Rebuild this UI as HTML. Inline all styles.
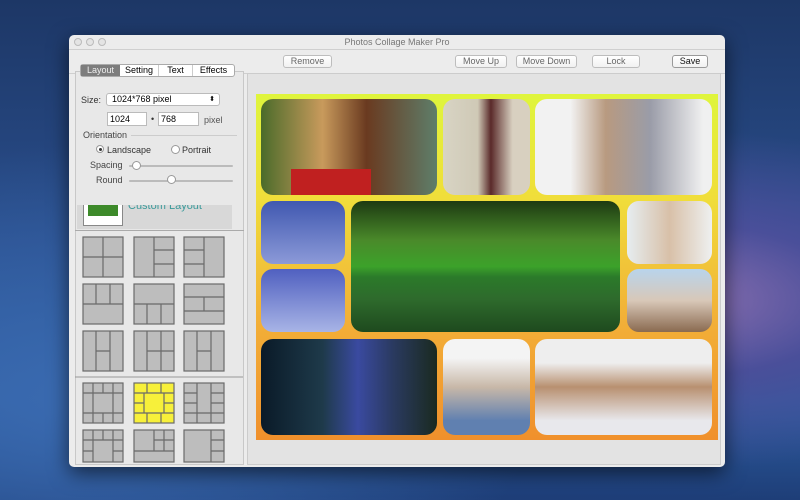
<!DOCTYPE html>
<html><head><style>
*{margin:0;padding:0;box-sizing:border-box}
body{width:800px;height:500px;overflow:hidden;position:relative;font-family:"Liberation Sans",sans-serif;
background:radial-gradient(ellipse at 85% 60%,#8a6fb0 0%,#4a4f9a 18%,transparent 40%),radial-gradient(ellipse at 10% 80%,#3a6ab0 0%,transparent 45%),linear-gradient(180deg,#1d3766 0%,#2a4f8e 50%,#2d5da0 80%,#1e3e78 100%)}
.a{position:absolute}
.win{left:69px;top:35px;width:656px;height:432px;background:#ececec;border-radius:5px;box-shadow:0 6px 20px rgba(0,0,0,.6)}
.title{left:0;top:0;width:656px;height:14px;text-align:center;font-size:9px;color:#777;line-height:14px}
.dot{width:8px;height:8px;border-radius:50%;border:1px solid #bbb;background:#e4e4e4;top:3px}
.btn{height:13px;border:1px solid #bdbdbd;border-radius:3px;background:linear-gradient(#fff,#f1f1f1);font-size:9px;color:#666;text-align:center;line-height:11px}
.lp{left:6px;top:36px;width:169px;height:394px;border:1px solid #c8c8c8;background:#e8e8e8}
.rp{left:178px;top:38px;width:474px;height:392px;border:1px solid #ccc;background:#e3e3e3}
.t{font-size:9px;color:#333}
.ph{position:absolute;border-radius:12px;overflow:hidden}
</style></head><body>
<div class="a win">
 <div class="a title">Photos Collage Maker Pro</div>
 <div class="a dot" style="left:5px"></div><div class="a dot" style="left:17px"></div><div class="a dot" style="left:29px"></div>
 <div class="a" style="left:0;top:14px;width:656px;height:1px;background:#cfcfcf"></div>
 <div class="a btn" style="left:214px;top:20px;width:49px">Remove</div>
 <div class="a btn" style="left:386px;top:20px;width:52px">Move Up</div>
 <div class="a btn" style="left:447px;top:20px;width:61px">Move Down</div>
 <div class="a btn" style="left:523px;top:20px;width:48px">Lock</div>
 <div class="a btn" style="left:603px;top:20px;width:36px;color:#111;border-color:#999">Save</div>
 <div class="a" style="left:0;top:38px;width:656px;height:1px;background:#cfcfcf"></div>
 <div class="a lp"></div>
 <div class="a" style="left:11px;top:29px;width:155px;height:13px;border:1px solid #aaa;border-radius:3px;background:#fff;font-size:9px;display:flex;line-height:11px">
  <div style="width:39px;background:#7d7d7d;color:#eee;text-align:center">Layout</div>
  <div style="width:39px;text-align:center;border-right:1px solid #ccc">Setting</div>
  <div style="width:34px;text-align:center;border-right:1px solid #ccc">Text</div>
  <div style="flex:1;text-align:center">Effects</div>
 </div>
 <div class="a t" style="left:12px;top:60px">Size:</div>
 <div class="a" style="left:37px;top:58px;width:114px;height:13px;border:1px solid #bbb;border-radius:3px;background:#fff;font-size:9px;line-height:11px;padding-left:5px">1024*768 pixel<span style="float:right;margin-right:4px;font-size:7px">⬍</span></div>
 <div class="a" style="left:38px;top:77px;width:40px;height:14px;border:1px solid #bbb;background:#fff;font-size:9px;line-height:12px;padding-left:2px">1024</div>
 <div class="a t" style="left:82px;top:79px">•</div>
 <div class="a" style="left:89px;top:77px;width:41px;height:14px;border:1px solid #bbb;background:#fff;font-size:9px;line-height:12px;padding-left:2px">768</div>
 <div class="a t" style="left:135px;top:80px;color:#555">pixel</div>
 <div class="a t" style="left:14px;top:95px;color:#444">Orientation</div>
 <div class="a" style="left:62px;top:100px;width:106px;height:1px;background:#ccc"></div>
 <div class="a" style="left:27px;top:110px;width:8px;height:8px;border:1px solid #999;border-radius:50%;background:#fff"><div style="width:3px;height:3px;background:#333;border-radius:50%;margin:1.5px"></div></div>
 <div class="a t" style="left:38px;top:110px">Landscape</div>
 <div class="a" style="left:102px;top:110px;width:9px;height:9px;border:1px solid #999;border-radius:50%;background:#fff"></div>
 <div class="a t" style="left:113px;top:110px">Portrait</div>
 <div class="a t" style="left:21px;top:125px;color:#444">Spacing</div>
 <div class="a" style="left:60px;top:130px;width:104px;height:2px;background:#bbb;border-radius:1px"></div>
 <div class="a" style="left:63px;top:126px;width:9px;height:9px;border:1px solid #999;border-radius:50%;background:#fff"></div>
 <div class="a t" style="left:27px;top:140px;color:#444">Round</div>
 <div class="a" style="left:60px;top:145px;width:104px;height:2px;background:#bbb;border-radius:1px"></div>
 <div class="a" style="left:98px;top:140px;width:9px;height:9px;border:1px solid #999;border-radius:50%;background:#fff"></div>
 <div class="a" style="left:8px;top:170px;width:155px;height:24px;background:#d8d8d8;overflow:hidden">
  <div class="a" style="left:6px;top:-6px;width:40px;height:27px;border:1px solid #888;background:#fff"><div style="margin:2px 4px;height:14px;background:#3d8a2a"></div></div>
  <div class="a" style="left:51px;top:-5px;font-size:11px;color:#3a9a9a">Custom Layout</div>
 </div>
 <div class="a" style="left:6px;top:195px;width:169px;height:1px;background:#aaa"></div>
 <svg class="a" style="left:6px;top:196px" width="168" height="234">
  <g fill="#bdbdbd" stroke="#6a6a6a" stroke-width="1.2">
   <rect x="8" y="6" width="40" height="40"/><rect x="59" y="6" width="40" height="40"/><rect x="109" y="6" width="40" height="40"/>
   <rect x="8" y="53" width="40" height="40"/><rect x="59" y="53" width="40" height="40"/><rect x="109" y="53" width="40" height="40"/>
   <rect x="8" y="100" width="40" height="40"/><rect x="59" y="100" width="40" height="40"/><rect x="109" y="100" width="40" height="40"/>
   <rect x="8" y="152" width="40" height="40"/><rect x="59" y="152" width="40" height="40" fill="#f7f03a"/><rect x="109" y="152" width="40" height="40"/>
   <rect x="8" y="199" width="40" height="32"/><rect x="59" y="199" width="40" height="32"/><rect x="109" y="199" width="40" height="32"/>
  </g>
  <g stroke="#6a6a6a" stroke-width="1.2" fill="none">
   <path d="M28 6V46M8 26H48M79 6V46M79 19H99M79 33H99M129 6V46M109 19H129M109 33H129"/>
   <path d="M8 73H48M21 53V73M35 53V73M59 73H99M72 73V93M86 73V93M109 66H149M109 80H149M129 66V80"/>
   <path d="M21 100V140M35 100V140M21 120H35M72 100V140M86 100V140M72 120H99M122 100V140M136 100V140M122 120H136"/>
   <path d="M8 162H48M8 182H48M18 152V162M28 152V162M38 152V162M18 182V192M28 182V192M38 182V192M18 162V182M38 162V182"/>
   <path d="M59 162H99M59 182H99M69 162V182M89 162V182M72 152V162M86 152V162M72 182V192M86 182V192M59 172H69M89 172H99"/>
   <path d="M109 182H149M122 152V192M136 152V192M109 162H122M109 172H122M136 162H149M136 172H149"/>
   <path d="M8 209H48M18 199V231M38 199V231M28 199V209M8 220H18M38 220H48"/>
   <path d="M59 220H99M79 199V220M79 209H99M89 199V220"/>
   <path d="M136 199V231M136 209H149M136 220H149"/>
  </g>
  <path d="M0 146H168" stroke="#999"/>
 </svg>
 <div class="a rp"></div>
</div>
<div class="a" style="left:256px;top:94px;width:462px;height:346px;background:linear-gradient(180deg,#dff53c 0%,#f0de3a 30%,#f2b038 65%,#f0902c 100%)">
 <div class="ph" style="left:5px;top:5px;width:176px;height:96px;background:linear-gradient(90deg,#4a6b2a,#c89a5c 35%,#6a3a20 60%,#5e7e6a);"><div class="a" style="left:30px;top:70px;width:80px;height:30px;background:#c02020"></div></div>
 <div class="ph" style="left:187px;top:5px;width:87px;height:96px;background:linear-gradient(90deg,#d8d4c4,#cfc9b6 40%,#5a2a2a 55%,#d8d0c0 80%)"></div>
 <div class="ph" style="left:279px;top:5px;width:177px;height:96px;background:linear-gradient(90deg,#f2f2f2 20%,#b89a80 40%,#9a9ca8 65%,#f0f0f0 95%)"></div>
 <div class="ph" style="left:5px;top:107px;width:84px;height:63px;background:linear-gradient(#4058b0,#8c9ad8)"></div>
 <div class="ph" style="left:5px;top:175px;width:84px;height:63px;background:linear-gradient(#5060c0,#a8b4e6)"></div>
 <div class="ph" style="left:95px;top:107px;width:269px;height:131px;background:linear-gradient(180deg,#1d3a12 0%,#4a8a2a 30%,#3ca22a 50%,#2b7a2a 58%,#2e6a2c 75%,#1e4a1e 100%)"></div>
 <div class="ph" style="left:371px;top:107px;width:85px;height:63px;background:linear-gradient(90deg,#e6edf0,#d8c0a8 50%,#eef0f0)"></div>
 <div class="ph" style="left:371px;top:175px;width:85px;height:63px;background:linear-gradient(180deg,#b8d4ec,#d8c8b8 50%,#8a6a50)"></div>
 <div class="ph" style="left:5px;top:245px;width:176px;height:96px;background:linear-gradient(90deg,#0a1a28,#1e3a4a 35%,#3a4aa0 55%,#2a3a60 75%,#1a2a20)"></div>
 <div class="ph" style="left:187px;top:245px;width:87px;height:96px;background:linear-gradient(180deg,#f4f4f4 20%,#c8b8a8 50%,#6080b0 85%)"></div>
 <div class="ph" style="left:279px;top:245px;width:177px;height:96px;background:linear-gradient(180deg,#eeeeee 25%,#b89070 50%,#e8e8ec 85%)"></div>
</div>
</body></html>
